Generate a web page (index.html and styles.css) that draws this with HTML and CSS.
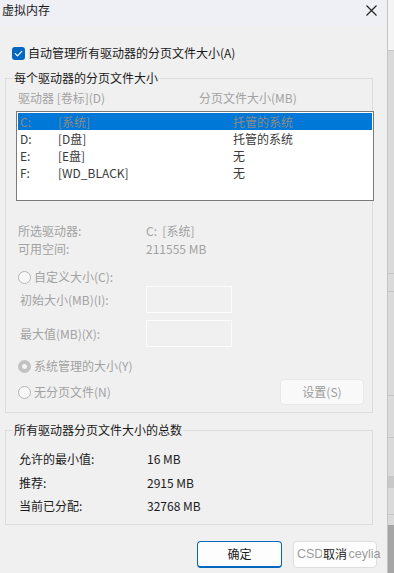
FILE: index.html
```html
<!DOCTYPE html>
<html lang="zh-CN">
<head>
<meta charset="utf-8">
<title>虚拟内存</title>
<link rel="stylesheet" href="styles.css">
</head>
<body>
<div class="screen">
  <div class="window">
    <div class="titlebar">
      <span class="title">虚拟内存</span>
      <svg class="close" width="11" height="11" viewBox="0 0 11 11"><path d="M0.5 0.5L10.5 10.5M10.5 0.5L0.5 10.5" stroke="#1c1c1c" stroke-width="1.1" fill="none"/></svg>
    </div>
    <div class="content">
      <div class="auto-row">
        <span class="checkbox"><svg width="13" height="13" viewBox="0 0 13 13"><path d="M3.3 6.7L5.5 8.9L9.8 4.3" stroke="#fff" stroke-width="1.2" fill="none" stroke-linecap="round" stroke-linejoin="round"/></svg></span>
        <span class="auto-label">自动管理所有驱动器的分页文件大小(A)</span>
      </div>

      <fieldset class="group group-drives">
        <legend>每个驱动器的分页文件大小</legend>
        <div class="group-body">
          <div class="list-header disabled">
            <span class="hdr-drive">驱动器 [卷标](D)</span>
            <span>分页文件大小(MB)</span>
          </div>
          <div class="listbox">
            <div class="list-row selected"><span class="c1">C:</span><span class="c2">[系统]</span><span class="c3">托管的系统</span></div>
            <div class="list-row"><span class="c1">D:</span><span class="c2">[D盘]</span><span class="c3">托管的系统</span></div>
            <div class="list-row"><span class="c1">E:</span><span class="c2">[E盘]</span><span class="c3">无</span></div>
            <div class="list-row"><span class="c1">F:</span><span class="c2">[WD_BLACK]</span><span class="c3">无</span></div>
          </div>

          <div class="info-row info-first disabled"><span class="info-label">所选驱动器:</span><span>C:&nbsp;&nbsp;[系统]</span></div>
          <div class="info-row disabled"><span class="info-label">可用空间:</span><span>211555 MB</span></div>

          <div class="radio-row radio-custom disabled"><span class="radio"></span><span>自定义大小(C):</span></div>
          <div class="size-row disabled"><span class="size-label">初始大小(MB)(I):</span><span class="textbox"></span></div>
          <div class="size-row size-second disabled"><span class="size-label">最大值(MB)(X):</span><span class="textbox"></span></div>

          <div class="radio-row radio-sys disabled"><span class="radio checked"></span><span>系统管理的大小(Y)</span></div>
          <div class="radio-row radio-none disabled">
            <span class="radio"></span><span>无分页文件(N)</span>
            <span class="set-btn">设置(S)</span>
          </div>
        </div>
      </fieldset>

      <fieldset class="group group-total">
        <legend>所有驱动器分页文件大小的总数</legend>
        <div class="group-body total-body">
          <div class="total-row"><span class="total-label">允许的最小值:</span><span>16 MB</span></div>
          <div class="total-row"><span class="total-label">推荐:</span><span>2915 MB</span></div>
          <div class="total-row"><span class="total-label">当前已分配:</span><span>32768 MB</span></div>
        </div>
      </fieldset>

      <div class="buttons">
        <span class="btn btn-ok">确定</span>
        <span class="btn btn-cancel"><span class="watermark">CSDN @ceylia</span><span class="btn-text">取消</span></span>
      </div>
    </div>
  </div>
  <div class="backdrop"></div>
</div>
</body>
</html>
```

FILE: styles.css
```css
* { box-sizing: border-box; }

html, body {
  margin: 0;
  padding: 0;
}

body {
  width: 394px;
  height: 573px;
  overflow: hidden;
  font-family: "Noto Sans CJK SC", "Noto Sans", sans-serif;
  font-size: 12px;
  color: #1a1a1a;
  background: #f0f0f0;
}

.screen {
  display: flex;
  width: 394px;
  height: 573px;
}

.window {
  width: 388px;
  height: 573px;
  background: #f0f0f0;
  border-right: 1px solid #c4c4c4;
  display: flex;
  flex-direction: column;
}

.backdrop {
  flex: 1;
  background:
    linear-gradient(#f4f4f4 0 50px, #c8c8c8 50px 51px, transparent 51px),
    linear-gradient(to bottom,
      transparent 0 273px, #c4c4c4 273px 274px, transparent 274px 291px,
      #c4c4c4 291px 292px, transparent 292px 395px, #c4c4c4 395px 396px,
      transparent 396px 437px, #c4c4c4 437px 438px, transparent 438px 476px,
      #c8c8c8 476px 488px, transparent 488px 514px, #c4c4c4 514px 515px,
      transparent 515px),
    linear-gradient(#dadada 0 525px, #a6a6a6 525px);
}

/* title bar */
.titlebar {
  height: 26px;
  background: #eff0f6;
  display: flex;
  align-items: center;
  justify-content: space-between;
  padding: 0 10px 1px 2px;
}

.title {
  line-height: 16px;
  margin-top: -5px;
}

.close {
  margin-top: -5px;
}

.content {
  display: flex;
  flex-direction: column;
}

/* auto checkbox */
.auto-row {
  display: flex;
  align-items: center;
  margin-top: 19px;
  padding-left: 12px;
  height: 16px;
  line-height: 16px;
}

.checkbox {
  width: 13px;
  height: 13px;
  border-radius: 3px;
  background: #0067c0;
  display: flex;
  margin-right: 3px;
}

/* group boxes */
.group {
  margin: 9px 14px 0 5px;
  padding: 0 0 0 7px;
  border: 1px solid #dcdcdc;
  min-width: 0;
}

.group legend {
  padding: 0 1px;
  line-height: 16px;
  color: #1a1a1a;
}

.group-body {
  padding-left: 5px;
}

.group-drives .group-body {
  padding-top: 4px;
  padding-bottom: 7px;
  padding-right: 8px;
}

.disabled { color: #a2a2a2; }

.list-header {
  display: flex;
  line-height: 16px;
  height: 16px;
}

.hdr-drive {
  width: 181px;
}

.listbox {
  margin: 5px -10px 0 -2px;
  height: 90px;
  border: 1px solid #7a7a7a;
  background: #ffffff;
  padding: 1px;
}

.list-row {
  display: flex;
  height: 17px;
  line-height: 17px;
  padding-left: 2px;
  color: #3a3a3a;
}

.list-row.selected {
  background: #0078d7;
  color: #8e8a86;
}

.c1 { width: 38px; }
.c2 { width: 175px; }

.info-row {
  display: flex;
  height: 18px;
  line-height: 18px;
}

.info-first { margin-top: 21px; }

.info-label { width: 128px; }

.radio-row {
  display: flex;
  align-items: center;
  height: 18px;
  line-height: 18px;
}

.radio-custom { margin-top: 10px; }
.radio-sys { margin-top: 10px; }

.radio-none {
  margin-top: 4px;
  height: 26px;
}

.radio {
  width: 13px;
  height: 13px;
  border-radius: 50%;
  border: 1px solid #b5b5b5;
  background: #f7f7f7;
  margin-right: 3px;
  flex: none;
}

.radio.checked {
  border: 4px solid #c2c2c2;
  background: #f4f4f4;
}

.size-row {
  display: flex;
  align-items: center;
  height: 27px;
  padding-left: 2px;
}

.size-second { margin-top: 7px; }

.size-label { width: 126px; }

.textbox {
  width: 86px;
  height: 27px;
  border: 1px solid #fbfbfb;
  background: #f0f0f0;
}

.set-btn {
  margin-left: auto;
  width: 84px;
  height: 26px;
  border: 1px solid #e8e8e8;
  border-radius: 4px;
  background: #f9f9f9;
  color: #9c9c9c;
  display: flex;
  align-items: center;
  justify-content: center;
}

/* totals */
.group-total { margin-top: 9px; }

.total-body {
  padding-top: 9px;
  padding-bottom: 6px;
  padding-left: 6px;
}

.total-row {
  display: flex;
  height: 23.5px;
  line-height: 23.5px;
  color: #1a1a1a;
}

.total-label { width: 128px; }

/* dialog buttons */
.buttons {
  display: flex;
  justify-content: flex-end;
  gap: 11px;
  margin-top: 16px;
  padding-right: 10px;
}

.btn {
  height: 27px;
  border-radius: 4px;
  background: #fdfdfd;
  display: flex;
  align-items: center;
  justify-content: center;
  color: #1a1a1a;
}

.btn-ok {
  width: 85px;
  border: 1px solid #0067c0;
  border-bottom-width: 2px;
}

.btn-cancel {
  width: 84px;
  border: 1px solid #dedede;
  position: relative;
}

.watermark {
  position: absolute;
  left: 3px;
  top: 4px;
  font-family: "Liberation Sans", Arial, sans-serif;
  font-size: 12.5px;
  line-height: 17px;
  color: rgba(120, 120, 120, 0.75);
  white-space: nowrap;
}

.btn-text {
  position: relative;
  background: #fdfdfd;
  line-height: 16px;
  padding: 0 1px;
}
```
